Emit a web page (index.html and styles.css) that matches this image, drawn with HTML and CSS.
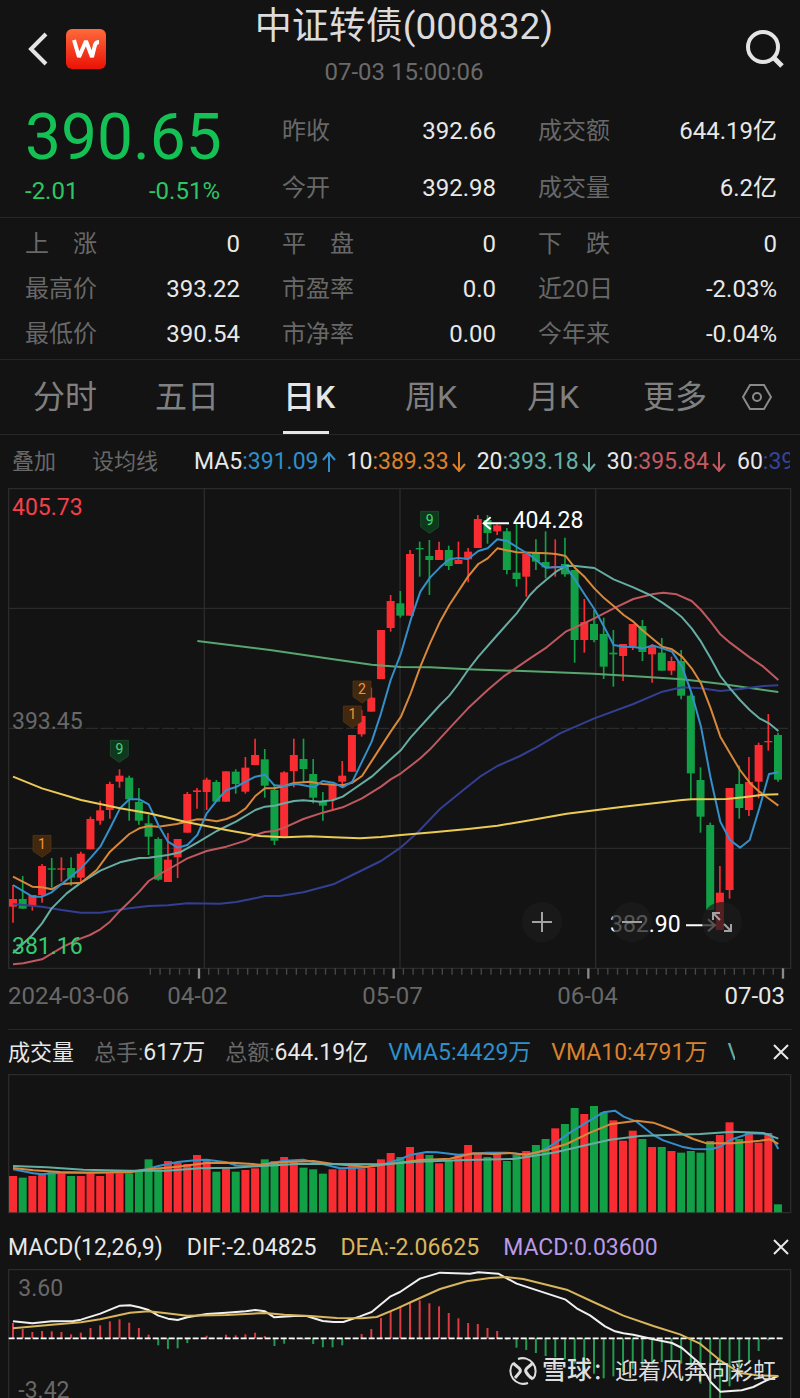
FILE: index.html
```html
<!DOCTYPE html>
<html lang="zh-CN">
<head>
    <meta charset="UTF-8">
    <meta name="viewport" content="width=device-width, initial-scale=1.0">
    <title>中证转债(000832)</title>
    <link rel="stylesheet" href="styles.css">
</head>
<body>
    <header class="top">
        <div class="top-left">
            <button class="icon-btn" aria-label="返回">
                <svg width="20" height="34" viewBox="0 0 20 34"><path d="M18 2 L3 17 L18 32" fill="none" stroke="#e4e4e4" stroke-width="4"/></svg>
            </button>
            <svg class="logo" width="40" height="40" viewBox="0 0 40 40">
                <defs>
                    <linearGradient id="logoFill" x1="0" y1="0" x2="0" y2="1">
                        <stop offset="0" stop-color="#ff6a3c"/>
                        <stop offset="1" stop-color="#ea1206"/>
                    </linearGradient>
                </defs>
                <rect x="0" y="0" width="40" height="40" rx="6" fill="url(#logoFill)"/>
                <path d="M8 11 L13 28 L20 12 L26 28 L29 16 Q30 13 33 13" fill="none" stroke="#fff" stroke-width="4" stroke-linejoin="bevel"/>
            </svg>
        </div>
        <div class="top-title">
            <h1>中证转债(000832)</h1>
            <time>07-03 15:00:06</time>
        </div>
        <button class="icon-btn search" aria-label="搜索">
            <svg width="40" height="40" viewBox="0 0 40 40" fill="none" stroke="#e4e4e4"><circle cx="18" cy="18" r="15" stroke-width="4"/><path d="M28 28 L37 37" stroke-width="5"/></svg>
        </button>
    </header>

    <!-- Quote -->
    <section class="quote">
        <div class="price">
            <strong>390.65</strong>
            <div class="change"><span>-2.01</span><span>-0.51%</span></div>
        </div>
        <dl class="pairs tall">
            <div><dt>昨收</dt><dd>392.66</dd></div>
            <div><dt>今开</dt><dd>392.98</dd></div>
        </dl>
        <dl class="pairs tall">
            <div><dt>成交额</dt><dd>644.19亿</dd></div>
            <div><dt>成交量</dt><dd>6.2亿</dd></div>
        </dl>
    </section>
    <section class="quote stats">
        <dl class="pairs">
            <div><dt>上　涨</dt><dd>0</dd></div>
            <div><dt>最高价</dt><dd>393.22</dd></div>
            <div><dt>最低价</dt><dd>390.54</dd></div>
        </dl>
        <dl class="pairs">
            <div><dt>平　盘</dt><dd>0</dd></div>
            <div><dt>市盈率</dt><dd>0.0</dd></div>
            <div><dt>市净率</dt><dd>0.00</dd></div>
        </dl>
        <dl class="pairs">
            <div><dt>下　跌</dt><dd>0</dd></div>
            <div><dt>近20日</dt><dd>-2.03%</dd></div>
            <div><dt>今年来</dt><dd>-0.04%</dd></div>
        </dl>
    </section>

    <!-- Period tabs -->
    <nav class="tabs">
        <button>分时</button>
        <button>五日</button>
        <button class="active">日K</button>
        <button>周K</button>
        <button>月K</button>
        <button>更多</button>
        <button aria-label="设置">
            <svg width="30" height="28" viewBox="0 0 30 28" fill="none" stroke="#8a8a8a" stroke-width="2"><path d="M8 2 H22 L29 14 L22 26 H8 L1 14 Z"/><circle cx="15" cy="14" r="4"/></svg>
        </button>
    </nav>

    <div class="ma-row">
        <button>叠加</button>
        <button>设均线</button>
        <div class="ma-list">
            <span class="blue"><b>MA5</b>:391.09<svg class="arrow" viewBox="0 0 14 20"><path d="M7 20 V1 M1 8 L7 1 L13 8"/></svg></span>
            <span class="orange"><b>10</b>:389.33<svg class="arrow" viewBox="0 0 14 20"><path d="M7 0 V19 M1 12 L7 19 L13 12"/></svg></span>
            <span class="teal"><b>20</b>:393.18<svg class="arrow" viewBox="0 0 14 20"><path d="M7 0 V19 M1 12 L7 19 L13 12"/></svg></span>
            <span class="rose"><b>30</b>:395.84<svg class="arrow" viewBox="0 0 14 20"><path d="M7 0 V19 M1 12 L7 19 L13 12"/></svg></span>
            <span class="navy"><b>60</b>:39</span>
        </div>
    </div>

    <!-- Candles -->
    <section class="chart">
        <svg id="kline" viewBox="24 24 2352 1476"></svg>
        <div class="chart-tools">
            <button aria-label="放大"><svg width="22" height="22" viewBox="0 0 22 22"><path d="M11 1 V21 M1 11 H21"/></svg></button>
            <button aria-label="缩小"><svg width="22" height="22" viewBox="0 0 22 22"><path d="M1 11 H21"/></svg></button>
            <button aria-label="全屏"><svg width="22" height="22" viewBox="0 0 22 22"><path d="M2 9 V2 H9 M2 2 L9 9 M20 13 V20 H13 M20 20 L13 13"/></svg></button>
        </div>
        <div class="dates">
            <span>2024-03-06</span><span>04-02</span><span>05-07</span><span>06-04</span><span class="last">07-03</span>
        </div>
    </section>

    <!-- Volume -->
    <section class="chart volume">
        <div class="chart-head">
            <div class="chart-values">
                <h2>成交量</h2>
                <span><i>总手:</i>617万</span>
                <span><i>总额:</i>644.19亿</span>
                <span class="blue">VMA5:4429万</span>
                <span class="orange">VMA10:4791万</span>
                <span class="teal clip">V</span>
            </div>
            <button class="close" aria-label="关闭成交量"><svg width="16" height="16" viewBox="0 0 16 16"><path d="M1 1 L15 15 M15 1 L1 15"/></svg></button>
        </div>
        <svg id="volume" viewBox="24 342 2352 419"></svg>
    </section>

    <!-- MACD -->
    <section class="chart macd">
        <div class="chart-head">
            <div class="chart-values">
                <h2>MACD(12,26,9)</h2>
                <span>DIF:-2.04825</span>
                <span class="gold">DEA:-2.06625</span>
                <span class="violet">MACD:0.03600</span>
            </div>
            <button class="close" aria-label="关闭MACD"><svg width="16" height="16" viewBox="0 0 16 16"><path d="M1 1 L15 15 M15 1 L1 15"/></svg></button>
        </div>
        <svg id="macd" viewBox="24 146 2352 387"></svg>
        <div class="watermark">
            <svg width="28" height="28" viewBox="0 0 28 28" fill="none" stroke="#dedede" stroke-width="2">
                <path d="M9 2 A13 13 0 0 1 24 22 M19 26 A13 13 0 0 1 4 6"/>
                <path d="M4 6 L10 11 Q12 13 11 15 L6 21 M24 6 L18 11 Q16 13 17 15 Q19 19 24 22" stroke-width="3"/>
            </svg>
            <span><b>雪球</b>：迎着风奔向彩虹</span>
        </div>
    </section>

    <script src="charts.js"></script>
</body>
</html>
```

FILE: styles.css
```css
* {
    box-sizing: border-box;
}
body {
    margin: 0;
    background-color: #131313;
    color: #e8e8e8;
    font-family: Roboto, "Noto Sans CJK SC", sans-serif;
    font-size: 24px;
    line-height: 32px;
    overflow-x: hidden;
}
button {
    padding: 0;
    border: none;
    background: none;
    color: inherit;
    font: inherit;
    cursor: pointer;
}
h1, h2, dl, dd {
    margin: 0;
    font-weight: 400;
}
svg {
    display: block;
}

/* Header */
.top {
    display: grid;
    grid-template-columns: 1fr auto 1fr;
    height: 98px;
    padding: 0 15px 0 28px;
}
.top-left {
    display: flex;
    align-items: center;
    gap: 18px;
}
.top-title {
    display: flex;
    flex-direction: column;
    align-items: center;
    margin-right: 5px;
}
.top-title h1 {
    color: #dcdcdc;
    font-size: 37px;
    line-height: 54px;
}
.top-title time {
    color: #6a6a6a;
    line-height: 36px;
}
.search {
    justify-self: end;
}

/* Quote */
.quote {
    display: grid;
    grid-template-columns: minmax(0, 215fr) minmax(0, 214fr) minmax(0, 239fr);
    column-gap: 42px;
    padding: 5px 23px 0 25px;
    border-bottom: 1px solid #262626;
}
.price {
    color: #14c154;
    padding-right: 20px;
}
.price strong {
    display: block;
    font-size: 64px;
    font-weight: 400;
    line-height: 70px;
}
.change {
    display: flex;
    justify-content: space-between;
    line-height: 36px;
    color: #2dc665;
}
.pairs div {
    display: flex;
    justify-content: space-between;
    line-height: 45px;
}
.pairs dt {
    color: #686868;
}
.pairs.tall div {
    line-height: 57px;
}
.stats {
    padding-top: 4px;
    padding-bottom: 2px;
}

/* Tabs */
.tabs {
    display: grid;
    grid-template-columns: repeat(6, minmax(0, 122fr)) minmax(0, 42fr);
    height: 75px;
    padding: 0 22px 0 4px;
    border-bottom: 1px solid #262626;
    color: #808080;
    font-size: 32px;
}
.tabs button {
    justify-self: center;
}
.tabs .active {
    position: relative;
    color: #e6e6e6;
    font-weight: 500;
}
.tabs .active::after {
    content: "";
    position: absolute;
    left: 0;
    right: 6px;
    bottom: 0;
    height: 3px;
    background-color: #e6e6e6;
}

/* Moving averages */
.ma-row {
    display: flex;
    align-items: center;
    height: 53px;
    padding: 0 10px 0 12px;
    color: #686868;
    font-size: 22px;
    white-space: nowrap;
}
.ma-row button {
    flex-shrink: 0;
    margin-right: 36px;
}
.ma-list {
    display: flex;
    gap: 11px;
    flex: 1;
    overflow: hidden;
    font-size: 23px;
}
.ma-list span {
    display: flex;
    align-items: center;
}
.ma-list b {
    color: #e8e8e8;
    font-weight: 400;
}
.arrow {
    width: 14px;
    height: 20px;
    margin-left: 3px;
    fill: none;
    stroke: currentColor;
    stroke-width: 2;
}
.blue { color: #2f8fcb; }
.orange { color: #d9822b; }
.teal { color: #68b0a6; }
.rose { color: #c45a62; }
.navy { color: #36439a; }
.gold { color: #d9b65c; }
.violet { color: #b99ae6; }

/* Charts */
.chart {
    position: relative;
    margin: 0 8px;
}
.chart > svg {
    width: 100%;
    height: auto;
}
.chart-tools {
    position: absolute;
    top: 414px;
    right: 50px;
    display: flex;
    gap: 50px;
}
.chart-tools button {
    display: grid;
    place-items: center;
    width: 40px;
    height: 40px;
    border-radius: 50%;
    background-color: rgba(28, 28, 28, 0.75);
}
.chart-tools svg {
    fill: none;
    stroke: #a2a2a2;
    stroke-width: 2;
}
.dates {
    display: grid;
    grid-template-columns: minmax(0, 92fr) repeat(3, minmax(0, 195fr)) minmax(0, 107fr);
    padding-bottom: 17px;
    color: #686868;
    text-align: center;
    white-space: nowrap;
}
.dates span:first-child {
    text-align: left;
}
.dates .last {
    padding-right: 7px;
    color: #e8e8e8;
    text-align: right;
}
.chart-head {
    display: flex;
    align-items: center;
    justify-content: space-between;
    height: 44px;
    padding-right: 3px;
    font-size: 23px;
}
.volume {
    border-top: 1px solid #262626;
}
.macd {
    padding-top: 11px;
}
.chart-values {
    display: flex;
    align-items: baseline;
    gap: 20px;
    padding-top: 2px;
    white-space: nowrap;
}
.macd .chart-values {
    gap: 24px;
}
.chart-values h2 {
    font-size: 23px;
}
.volume h2 {
    font-size: 22px;
}
.chart-values i {
    color: #686868;
    font-size: 22px;
    font-style: normal;
}
.clip {
    width: 8px;
    overflow: hidden;
    align-self: stretch;
}
.close svg {
    fill: none;
    stroke: #e8e8e8;
    stroke-width: 2;
}
.watermark {
    position: absolute;
    right: 16px;
    bottom: 10px;
    display: flex;
    align-items: center;
    gap: 5px;
    color: #dedede;
    font-size: 23px;
}
.watermark b {
    font-size: 25px;
    font-weight: 500;
}

/* SVG parts */
.grid {
    fill: none;
    stroke: #2b2b2b;
    stroke-width: 4;
}
.ma {
    fill: none;
    stroke-width: 6;
    stroke-linejoin: round;
}
.label {
    font-size: 69px;
}
.badge-text {
    font-size: 42px;
    text-anchor: middle;
}
```

FILE: charts.js
```javascript
// All charts share one x scale: 80 trading days, 3 units per pixel
const STEP = 29.05;
const RED = '#f92c32';
const GREEN = '#12a047';
const COLORS = {
    blue: '#348fca', orange: '#d8883a', teal: '#66ada3', rose: '#bf585f',
    navy: '#333f92', yellow: '#eccb55', green: '#58a56f', gold: '#d9b65c', white: '#f0f0f0'
};

function xAt(i) {
    return 39 + i * STEP;
}

function add(svg, name, attrs, text) {
    const el = document.createElementNS('http://www.w3.org/2000/svg', name);
    for (const key in attrs) el.setAttribute(key, attrs[key]);
    if (text) el.textContent = text;
    svg.appendChild(el);
    return el;
}

function line(svg, color, points) {
    add(svg, 'polyline', { class: 'ma', stroke: COLORS[color], points: points });
}

// color, high, body top, body bottom, low
const candles = `r 1215 1257 1280 1328|g 1188 1257 1286 1286|r 1245 1245 1277 1292|r 1152 1158 1245 1268|g 1134 1165 1169 1223
r 1132 1165 1169 1205|g 1132 1164 1193 1217|r 1115 1121 1193 1208|r 1010 1017 1108 1108|r 962 991 1022 1034
r 905 912 990 1016|r 868 887 905 923|g 887 893 958 1022|g 924 966 1022 1034|g 1004 1030 1070 1125
g 1072 1077 1199 1202|r 1059 1139 1206 1206|r 1077 1077 1132 1194|r 936 942 1058 1058|r 924 931 936 986
r 893 899 936 990|g 900 906 965 965|r 874 874 965 965|g 868 875 912 941|r 831 863 935 941
r 776 825 855 855|g 807 838 917 953|g 912 930 1082 1095|r 874 877 1070 1070|r 776 825 873 922
g 776 837 867 908|g 837 882 953 970|g 936 966 977 1022|r 912 914 958 988|r 843 887 905 923
r 765 765 875 875|r 690 708 763 770|r 623 653 695 695|r 450 450 597 597|r 345 363 444 455
g 333 370 407 413|r 210 222 407 407|g 185 204 208 290|g 180 228 240 345|r 185 210 240 240
g 197 210 258 270|r 185 240 252 252|r 204 215 238 307|r 105 117 204 204|g 105 120 159 191
r 133 136 154 165|g 144 154 270 283|g 130 278 297 320|r 220 222 290 350|g 178 216 245 270
g 154 246 262 295|r 178 258 262 290|g 173 252 283 290|g 270 270 480 548|r 357 426 480 518
g 390 432 480 487|g 413 462 560 597|g 450 518 523 620|r 492 492 528 603|r 432 432 500 510
g 420 438 516 543|r 492 498 523 608|g 474 518 572 572|r 530 543 572 585|g 510 543 647 658
g 640 647 880 957|g 862 900 1010 1058|g 1028 1035 1290 1290|r 1158 1238 1350 1350|r 924 924 1230 1256
g 857 912 984 1016|r 831 906 990 1008|r 788 795 905 955|r 702 783 787 812|g 758 765 899 905`
    .split(/[|\n]/).map(row => row.split(' '));

function drawKline() {
    const svg = document.getElementById('kline');
    add(svg, 'path', { class: 'grid', d: 'M26 26H2372V1465H26ZM26 385H2372M26 1105H2372M613 26V1465M1200 26V1465M1787 26V1465' });
    add(svg, 'path', { class: 'grid', d: 'M26 745H2372', 'stroke-dasharray': '38 8' });

    // Time ticks
    for (let i = 0; i <= 65; i++) {
        const major = i % 20 === 5;
        const x = 451 + i * 29.2;
        add(svg, 'path', {
            d: `M${x} 1465V${major ? 1496 : 1484}`,
            stroke: major ? '#8a8a8a' : '#484848',
            'stroke-width': major ? 7 : 4
        });
    }

    candles.forEach(([c, high, top, bottom, low], i) => {
        const fill = c === 'r' ? RED : GREEN;
        add(svg, 'path', { d: `M${xAt(i)} ${high}V${low}`, stroke: fill, 'stroke-width': 5 });
        add(svg, 'rect', { x: xAt(i) - 12, y: top, width: 24, height: bottom - top, fill: fill });
    });

    line(svg, 'green', '592,483 810,510 1000,538 1115,554 1203,561 1290,562 1404,568 1590,574 1780,581 1930,590 2046,598 2161,611 2335,636');
    line(svg, 'navy', '39,1272 126,1280 185,1290 243,1298 301,1298 330,1294 388,1285 446,1278 504,1276 562,1270 660,1271 708,1266 750,1258 795,1248 840,1248 910,1237 1000,1213 1057,1185 1143,1143 1203,1102 1250,1060 1320,987 1390,930 1440,890 1492,858 1560,828 1609,802 1680,760 1783,715 1900,672 1987,635 2046,622 2103,625 2161,633 2220,627 2290,618 2335,616');
    line(svg, 'rose', '39,1453 70,1450 126,1438 190,1400 243,1375 270,1365 301,1348 330,1325 360,1292 388,1265 418,1235 446,1203 475,1185 533,1152 562,1135 620,1113 679,1100 737,1082 766,1065 795,1056 823,1053 853,1043 910,1017 968,998 1028,982 1086,955 1143,920 1172,898 1203,880 1261,835 1290,808 1348,745 1404,685 1463,630 1510,590 1590,535 1640,502 1697,455 1726,442 1783,415 1841,385 1900,357 1960,342 1990,338 2030,343 2075,363 2103,390 2132,425 2161,463 2190,488 2249,532 2290,560 2335,600');
    line(svg, 'teal', '39,1420 97,1365 126,1330 155,1285 200,1240 243,1208 301,1172 360,1147 418,1134 446,1133 504,1125 540,1117 592,1088 650,1053 708,1025 766,990 795,980 823,977 853,970 882,963 910,961 960,965 1000,960 1028,950 1057,930 1115,890 1172,838 1203,810 1232,772 1290,708 1320,675 1348,647 1375,612 1404,570 1435,530 1492,465 1550,400 1590,345 1609,325 1638,300 1668,275 1697,258 1720,257 1783,264 1841,298 1900,322 1950,345 1987,368 2016,388 2046,412 2075,445 2103,485 2132,535 2161,588 2190,625 2220,660 2249,690 2278,715 2307,730 2335,753');
    line(svg, 'orange', '39,1190 97,1220 126,1222 155,1228 185,1212 243,1208 290,1170 330,1115 388,1062 418,1045 446,1038 475,1040 530,1032 592,1018 620,1019 650,1024 679,1017 708,1005 737,985 766,948 795,925 823,925 853,918 882,909 930,905 968,912 1028,916 1057,908 1086,888 1143,800 1172,755 1203,710 1232,640 1261,560 1290,490 1320,425 1348,375 1404,290 1435,252 1463,235 1492,205 1550,217 1640,220 1668,222 1697,228 1726,265 1755,292 1783,325 1813,355 1841,378 1871,405 1900,425 1930,453 1987,500 2016,508 2046,530 2075,565 2103,610 2132,685 2161,770 2190,820 2220,870 2249,908 2278,935 2335,977');
    line(svg, 'blue', '39,1215 97,1250 126,1250 155,1237 200,1200 243,1165 275,1130 301,1100 330,1045 360,985 388,958 418,958 446,973 475,1035 504,1085 533,1103 562,1095 592,1065 620,1000 650,962 679,930 708,921 737,905 766,890 795,884 823,916 853,918 890,912 942,922 968,903 1000,908 1028,922 1057,905 1086,845 1115,785 1143,700 1172,600 1203,520 1232,420 1261,335 1290,293 1320,262 1348,238 1375,234 1404,237 1435,213 1463,205 1492,178 1520,182 1560,207 1590,225 1620,250 1638,263 1697,260 1726,300 1755,345 1783,387 1813,442 1841,495 1871,500 1900,501 1929,505 1958,496 1987,505 2016,515 2046,560 2075,640 2103,740 2132,895 2161,1025 2190,1080 2220,1103 2249,1080 2278,985 2307,882 2335,877');
    line(svg, 'yellow', '39,890 126,925 243,960 360,985 446,1000 562,1027 679,1050 780,1068 853,1072 930,1069 1000,1072 1080,1075 1143,1071 1203,1065 1300,1057 1404,1047 1492,1037 1590,1021 1700,1001 1870,980 2046,960 2075,958 2180,957 2230,952 2290,944 2335,943');

    // Sequence badges: x, top, number
    [[126, 1066, 1], [358, 781, 9], [1057, 678, 1], [1086, 603, 2], [1289, 94, 9]].forEach(([x, y, n]) => {
        const green = n === 9;
        add(svg, 'path', {
            d: `M${x - 27} ${y}H${x + 27}V${y + 47}L${x} ${y + 66}L${x - 27} ${y + 47}Z`,
            fill: green ? '#10381f' : '#42280f', stroke: green ? '#1c5a31' : '#5c3917', 'stroke-width': 2
        });
        add(svg, 'text', { class: 'badge-text', x: x, y: y + 40, fill: green ? '#45d774' : '#f29335' }, n);
    });

    // Axis prices and the high / low marks
    add(svg, 'text', { class: 'label', x: 36, y: 104, fill: '#f5404a' }, '405.73');
    add(svg, 'text', { class: 'label', x: 36, y: 746, fill: '#686868' }, '393.45');
    add(svg, 'text', { class: 'label', x: 36, y: 1421, fill: '#35cc6e' }, '381.16');
    add(svg, 'text', { class: 'label', x: 1538, y: 143, fill: '#fff' }, '404.28');
    add(svg, 'text', { class: 'label', x: 1830, y: 1356, fill: '#fff' }, '382.90');
    add(svg, 'path', { d: 'M1527 130H1451M1472 112L1451 130L1472 148M2058 1336H2145M2124 1318L2145 1336L2124 1354', fill: 'none', stroke: '#fff', 'stroke-width': 6 });
}

function drawVolume() {
    const svg = document.getElementById('volume');
    const tops = [648, 653, 648, 645, 633, 640, 648, 648, 640, 648, 640, 640, 640, 633, 598, 628, 603, 608, 612, 585,
        603, 635, 625, 635, 630, 625, 598, 603, 591, 600, 623, 628, 641, 628, 628, 612, 625, 623, 598, 579,
        591, 561, 580, 585, 610, 600, 585, 555, 582, 591, 580, 603, 585, 573, 555, 537, 505, 492, 444, 462,
        438, 457, 481, 542, 512, 537, 561, 561, 573, 578, 573, 578, 543, 525, 487, 537, 519, 548, 519, 733];
    // r = up day, g = down day, ten days per group
    const sides = ['rgrrgrgrrr', 'rrggggrrrr', 'rgrgrrggrr', 'gggrrrrrrr',
        'grrgrgrrrg', 'rggrggrggr', 'ggrrrgrgrg', 'gggrrgrrrg'].join('');
    add(svg, 'path', { class: 'grid', d: 'M26 344H2372V758H26Z' });
    tops.forEach((y, i) => {
        add(svg, 'rect', { x: xAt(i) - 12, y: y, width: 24, height: 757 - y, fill: sides[i] === 'r' ? RED : GREEN });
    });
    line(svg, 'blue', '39,628 100,640 126,643 155,640 220,638 330,637 400,634 440,628 475,618 533,606 592,600 620,599 679,607 708,616 766,618 795,612 853,602 910,599 970,613 1020,625 1080,623 1143,615 1200,598 1230,585 1280,576 1310,577 1375,584 1400,583 1460,578 1520,578 1575,584 1620,575 1660,553 1710,518 1760,487 1810,457 1845,452 1871,470 1910,485 1960,525 1990,541 2046,560 2080,567 2132,568 2161,560 2190,540 2249,520 2310,522 2335,567');
    line(svg, 'orange', '39,624 100,631 180,636 260,638 390,637 446,628 533,620 620,609 700,608 780,614 853,606 940,603 1000,612 1100,620 1200,608 1260,600 1350,596 1420,580 1480,582 1530,579 1580,584 1640,570 1700,552 1770,518 1830,493 1910,482 1960,488 2020,510 2080,537 2120,550 2200,550 2280,542 2310,538 2335,552');
    line(svg, 'teal', '39,618 140,622 250,629 390,632 500,632 600,625 700,623 800,617 900,611 1000,612 1150,613 1250,605 1400,600 1540,597 1660,578 1770,553 1830,539 1920,528 2020,524 2100,522 2200,515 2290,519 2335,536');
}

function drawMacd() {
    const svg = document.getElementById('macd');
    const zero = 354;
    const bars = [308, 326, 335, 332, 333, 335, 342, 337, 323, 315, 303, 297, 307, 323, 343, 375, 386, 384, 368, 354,
        346, 354, 343, 345, 342, 337, 347, 377, 370, 358, 358, 371, 381, 381, 375, 354, 341, 326, 293, 273,
        258, 248, 240, 249, 258, 278, 294, 308, 311, 323, 332, 358, 382, 389, 398, 407, 411, 417, 430, 445,
        460, 474, 468, 455, 446, 440, 432, 425, 425, 430, 440, 490, 534, 534, 498, 470, 430, 392, 360, 352];
    add(svg, 'path', { class: 'grid', d: 'M26 600V148H2372V600' });
    bars.forEach((y, i) => {
        add(svg, 'path', { d: `M${xAt(i)} ${zero}V${y}`, stroke: y < zero ? '#d93c42' : '#1f9a50', 'stroke-width': 6 });
    });
    add(svg, 'path', { d: `M26 ${zero}H2352`, stroke: '#fff', 'stroke-width': 5, 'stroke-dasharray': '18 6' });
    line(svg, 'white', '39,303 97,309 155,303 220,302 243,298 301,280 360,256 390,255 418,261 446,269 475,286 504,295 533,299 562,291 620,281 679,277 737,273 766,269 795,273 823,291 882,287 920,287 968,302 1000,305 1030,305 1080,288 1115,275 1172,228 1200,215 1260,175 1320,157 1410,160 1435,156 1495,160 1550,190 1697,238 1730,264 1770,285 1815,318 1845,333 1870,339 1900,343 1960,357 2016,368 2046,383 2100,430 2132,485 2161,514 2225,510 2260,500 2300,480 2335,467');
    line(svg, 'gold', '39,324 155,313 243,306 300,297 390,277 446,273 500,279 562,286 679,284 795,278 853,283 930,287 1010,293 1086,294 1130,290 1190,265 1240,242 1320,206 1400,183 1470,173 1520,170 1570,176 1700,208 1780,245 1870,286 1960,317 2040,342 2100,370 2160,420 2220,458 2270,465 2335,467');
    add(svg, 'text', { class: 'label', x: 55, y: 226, fill: '#686868' }, '3.60');
    add(svg, 'text', { class: 'label', x: 55, y: 532, fill: '#686868' }, '-3.42');
}

drawKline();
drawVolume();
drawMacd();
```
